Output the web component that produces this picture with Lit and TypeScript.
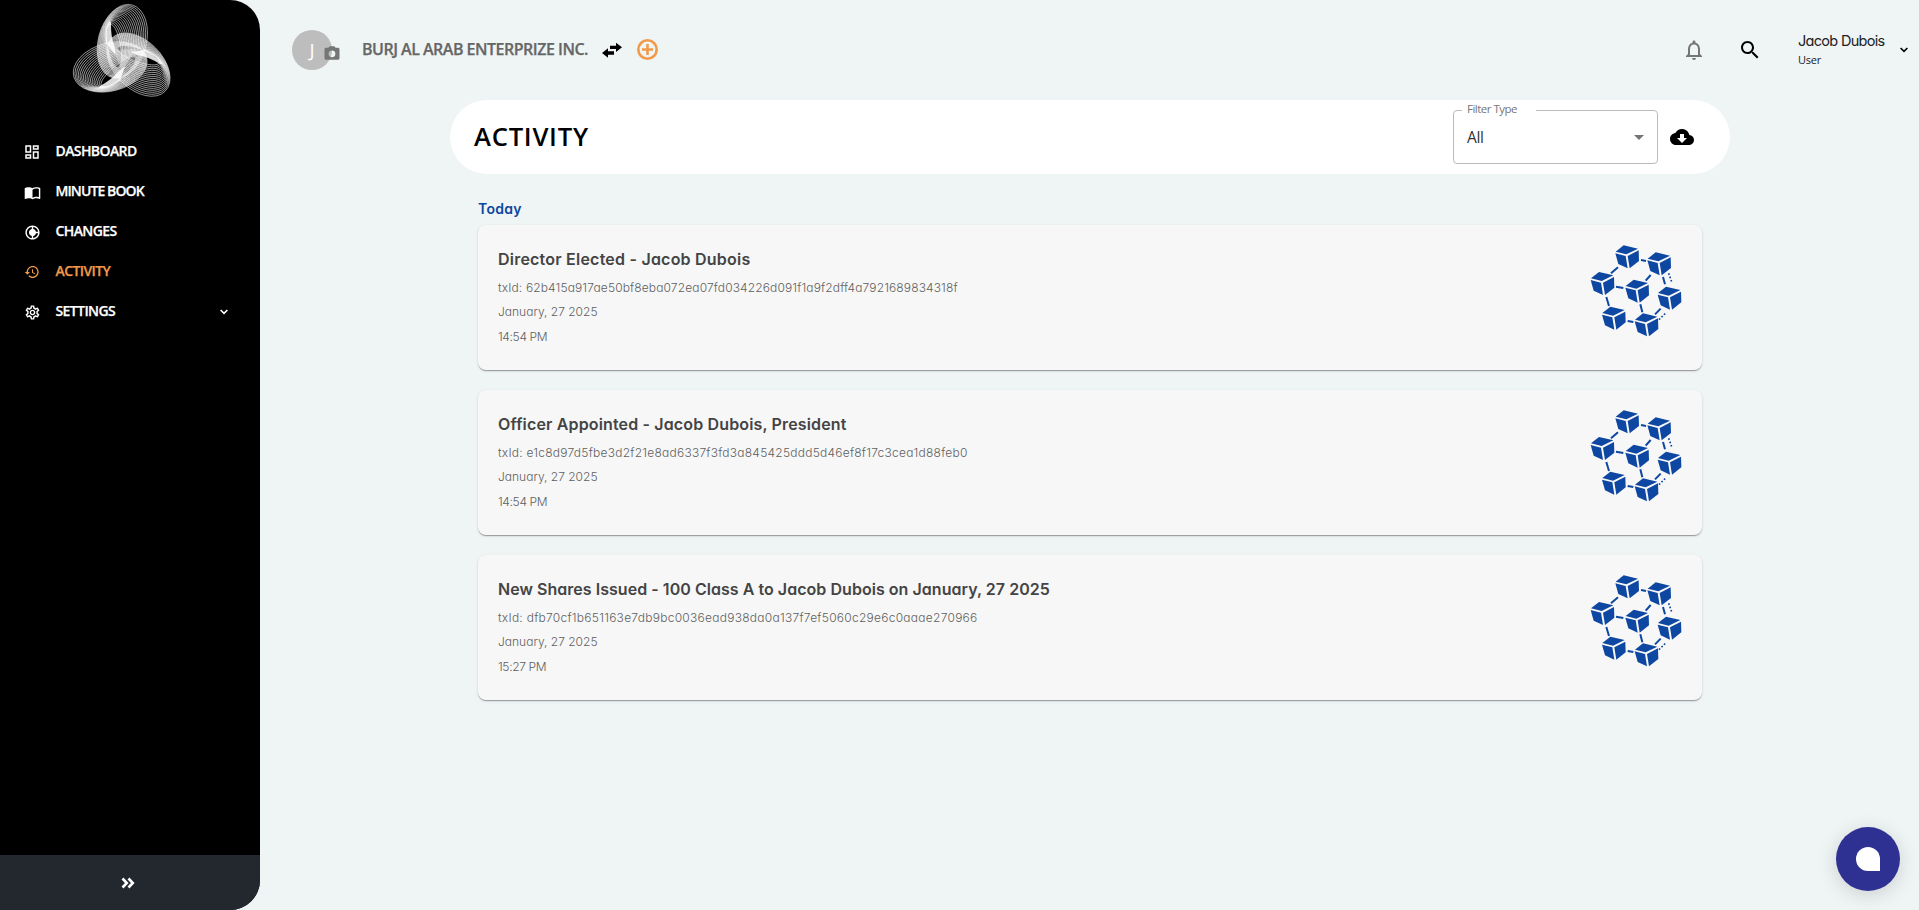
import { LitElement, html, svg, css } from "lit";
import { customElement, property } from "lit/decorators.js";

interface Entry { title: string; tx: string; date: string; time: string; }

const ENTRIES: Entry[] = [
  { title: "Director Elected - Jacob Dubois", tx: "62b415a917ae50bf8eba072ea07fd034226d091f1a9f2dff4a7921689834318f", date: "January, 27 2025", time: "14:54 PM" },
  { title: "Officer Appointed - Jacob Dubois, President", tx: "e1c8d97d5fbe3d2f21e8ad6337f3fd3a845425ddd5d46ef8f17c3cea1d88feb0", date: "January, 27 2025", time: "14:54 PM" },
  { title: "New Shares Issued - 100 Class A to Jacob Dubois on January, 27 2025", tx: "dfb70cf1b651163e7db9bc0036ead938da0a137f7ef5060c29e6c0aaae270966", date: "January, 27 2025", time: "15:27 PM" },
];

const ICONS: Record<string, string> = {
  dashboard: "M19 5v2h-4V5h4M9 5v6H5V5h4m10 8v6h-4v-6h4M9 17v2H5v-2h4M21 3h-8v6h8V3zM11 3H3v10h8V3zm10 8h-8v10h8V11zm-10 4H3v6h8v-6z",
  book: "M21 5c-1.110-.35-2.330-.5-3.500-.5-1.950 0-4.050.4-5.500 1.500-1.450-1.100-3.550-1.500-5.500-1.500S2.450 4.900 1 6v14.650c0 .25.25.5.5.5.1 0 .15-.05.25-.05C3.100 20.450 5.050 20 6.500 20c1.950 0 4.050.4 5.500 1.500 1.350-.85 3.800-1.500 5.500-1.500 1.650 0 3.350.3 4.750 1.050.1.05.15.05.25.05.25 0 .5-.25.5-.5V6c-.6-.45-1.250-.75-2-1zm0 13.500c-1.100-.35-2.300-.5-3.500-.5-1.700 0-4.150.65-5.500 1.500V8c1.350-.85 3.800-1.500 5.500-1.500 1.200 0 2.400.15 3.500.5v11.500z",
  changes: "M12 2C6.480 2 2 6.480 2 12s4.480 10 10 10 10-4.480 10-10S17.520 2 12 2zm1 2.070c3.610.45 6.480 3.330 6.930 6.930h-3.040c-.39-1.950-1.940-3.500-3.890-3.890V4.070zM4 12c0-4.060 3.070-7.440 7-7.930v3.040c-2.280.46-4 2.480-4 4.890s1.720 4.430 4 4.900v3.030c-3.930-.49-7-3.870-7-7.930zm9 7.930V16.900c1.960-.39 3.500-1.940 3.900-3.900h3.030c-.45 3.610-3.320 6.480-6.930 6.930z",
  history: "M13 3c-4.970 0-9 4.030-9 9H1l3.890 3.890.07.14L9 12H6c0-3.870 3.130-7 7-7s7 3.130 7 7-3.130 7-7 7c-1.930 0-3.680-.79-4.940-2.060l-1.420 1.420C8.270 19.990 10.510 21 13 21c4.970 0 9-4.030 9-9s-4.030-9-9-9zm-1 5v5l4.280 2.540.72-1.210-3.500-2.080V8H12z",
  settings: "M19.430 12.980c.04-.32.07-.64.07-.98s-.03-.66-.07-.98l2.110-1.650c.19-.15.24-.42.12-.64l-2-3.460c-.12-.22-.39-.3-.61-.22l-2.490 1c-.52-.4-1.080-.73-1.690-.98l-.38-2.650C14.460 2.180 14.250 2 14 2h-4c-.25 0-.46.18-.49.42l-.38 2.650c-.61.25-1.170.59-1.690.98l-2.490-1c-.23-.09-.49 0-.61.22l-2 3.460c-.13.22-.07.49.12.64l2.110 1.650c-.04.32-.07.65-.07.98s.03.66.07.98l-2.110 1.650c-.19.15-.24.42-.12.64l2 3.460c.12.22.39.3.61.22l2.490-1c.52.4 1.080.73 1.690.98l.38 2.650c.03.24.24.42.49.42h4c.25 0 .46-.18.49-.42l.38-2.650c.61-.25 1.170-.59 1.690-.98l2.490 1c.23.09.49 0 .61-.22l2-3.460c.12-.22.07-.49-.12-.64l-2.110-1.650zm-1.980-1.710c.04.31.05.52.05.73 0 .21-.02.43-.05.73l-.14 1.130.89.7 1.080.84-.7 1.210-1.270-.51-1.040-.42-.9.68c-.43.32-.84.56-1.250.73l-1.060.43-.16 1.130-.2 1.350h-1.400l-.19-1.350-.16-1.130-1.060-.43c-.43-.18-.83-.41-1.230-.71l-.91-.7-1.060.43-1.270.51-.7-1.210 1.080-.84.89-.7-.14-1.130c-.03-.31-.05-.54-.05-.74s.02-.43.05-.73l.14-1.130-.89-.7-1.080-.84.7-1.210 1.270.51 1.040.42.9-.68c.43-.32.84-.56 1.250-.73l1.060-.43.16-1.130.2-1.350h1.390l.19 1.350.16 1.130 1.060.43c.43.18.83.41 1.230.71l.91.7 1.060-.43 1.270-.51.7 1.210-1.070.85-.89.7.14 1.130zM12 8c-2.210 0-4 1.790-4 4s1.790 4 4 4 4-1.790 4-4-1.790-4-4-4zm0 6c-1.100 0-2-.9-2-2s.9-2 2-2 2 .9 2 2-.9 2-2 2z",
  bell: "M12 22c1.100 0 2-.9 2-2h-4c0 1.100.9 2 2 2zm6-6v-5c0-3.070-1.630-5.640-4.500-6.320V4c0-.83-.67-1.500-1.500-1.500s-1.500.67-1.500 1.500v.68C7.640 5.360 6 7.920 6 11v5l-2 2v1h16v-1l-2-2zm-2 1H8v-6c0-2.480 1.510-4.500 4-4.500s4 2.020 4 4.500v6z",
  search: "M15.500 14h-.79l-.28-.27C15.410 12.590 16 11.110 16 9.500 16 5.910 13.090 3 9.500 3S3 5.910 3 9.500 5.910 16 9.500 16c1.610 0 3.090-.59 4.230-1.570l.27.28v.79l5 4.990L20.490 19l-4.990-5zm-6 0C7.010 14 5 11.990 5 9.500S7.010 5 9.500 5 14 7.010 14 9.500 11.990 14 9.500 14z",
  cloud: "M19.350 10.040C18.670 6.590 15.640 4 12 4 9.110 4 6.600 5.640 5.350 8.040 2.340 8.360 0 10.910 0 14c0 3.310 2.690 6 6 6h13c2.760 0 5-2.240 5-5 0-2.640-2.050-4.780-4.650-4.960zM17 13l-5 5-5-5h3V9h4v4h3z",
  camera: "M20 5h-3.200L15 3H9L7.200 5H4c-1.100 0-2 .9-2 2v12c0 1.100.9 2 2 2h16c1.100 0 2-.9 2-2V7c0-1.100-.9-2-2-2zm-8 12.500a4.500 4.500 0 1 1 0-9 4.500 4.500 0 0 1 0 9z",
};

const icon = (name: string, size: number) => html`<svg width=${size} height=${size} viewBox="0 0 24 24" fill="currentColor"><path d=${ICONS[name]}></path></svg>`;

const chevron = html`<svg width="8" height="6" viewBox="0 0 8 6" fill="none" stroke="currentColor" stroke-width="1.6"><path d="M0.600 1l3.400 3.400L7.400 1"></path></svg>`;

const mix = (a: number, b: number, t: number) => a + (b - a) * t;

@customElement("brand-logo")
export class BrandLogo extends LitElement {
  static styles = css`:host { display: block; width: 125px; height: 105px; } svg { display: block; }`;
  render() {
    const steps = Array.from({ length: 17 }, (_, i) => i / 16);
    const petal = (turn: number) => svg`<g transform="rotate(${turn} 191 173)">
      ${steps.map(t => svg`<ellipse cx="0" cy="0" rx=${mix(72, 20, t)} ry=${mix(113, 66, t)}
        transform="translate(${mix(187, 162, t)} ${mix(124, 138, t)}) rotate(${mix(15, -10, t)})"></ellipse>`)}
      <path d="M148 64Q136 108 137 130L150 144L166 164L164 140Q152 112 153 68Z" fill="#fff" fill-opacity="0.85" stroke="none"></path>
    </g>`;
    return html`<svg width="125" height="105" viewBox="0 0 375 315" fill="none" stroke="#fff" stroke-width="2.2" stroke-opacity="0.72">
      ${petal(0)}${petal(120)}${petal(240)}
      <path d="M160 150L228 146L186 214Z" fill="#fff" fill-opacity="0.35" stroke="none"></path>
    </svg>`;
  }
}

@customElement("chain-icon")
export class ChainIcon extends LitElement {
  static styles = css`:host { display: block; width: 92px; height: 92px; } svg { display: block; }`;
  render() {
    const cubes = [[201, 110], [297, 131], [127, 190], [231, 213], [328, 234], [161, 294], [259, 314]];
    return html`<svg width="92" height="92" viewBox="90 75 276 276" fill="#0d47a1">
      ${cubes.map(([x, y]) => svg`<g transform="translate(${x} ${y})">
        <path d="M-34-15L-10-34L33-24L-2-7Z"></path><path d="M-35-10L-4-2L2 35L-26 22Z"></path><path d="M35-19L2-2L8 35L36 13Z"></path></g>`)}
      <g fill="none" stroke="#0d47a1" stroke-width="6">
        <path d="M243 120l15 3M153 160l21-18M168 200l22 4M257 182l15-17M309 171l6 22M139 231l8 27M241 253l6 24M203 303l17 3M285 283l17-17"></path>
        <path stroke-width="5" stroke-dasharray="5 5.500" d="M326 160l10 28M297 299l21-21"></path>
      </g>
    </svg>`;
  }
}

@customElement("side-nav")
export class SideNav extends LitElement {
  static styles = css`
    :host { display: flex; flex-direction: column; width: 260px; height: 910px; background: #000; color: #fff; border-radius: 0 30px 30px 0; overflow: hidden; font-family: "Open Sans", sans-serif; }
    .logo { padding-left: 60px; height: 132px; }
    .item { display: flex; align-items: center; height: 40px; padding: 0 32px 0 24px; font-size: 14px; font-weight: 600; box-sizing: border-box; }
    .item svg { display: block; }
    .glyph { display: grid; place-items: center; place-content: center; width: 16px; height: 18px; }
    .label { margin-left: 15.5px; flex: 1; white-space: nowrap; letter-spacing: -0.6px; padding-bottom: 3px; -webkit-text-stroke: 0.25px currentColor; }
    .book { letter-spacing: -0.9px; }
    .active { color: #f2994a; }
    .grow { flex: 1; }
    .foot { display: flex; align-items: center; height: 55px; padding-left: 121px; background: #23282f; }
  `;
  render() {
    const items: [string, string, number][] = [["dashboard", "DASHBOARD", 18], ["book", "MINUTE BOOK", 17], ["changes", "CHANGES", 17], ["history", "ACTIVITY", 16], ["settings", "SETTINGS", 17]];
    return html`
      <div class="logo"><brand-logo></brand-logo></div>
      ${items.map(([i, t, s]) => html`<div class="item ${t === "ACTIVITY" ? "active" : ""}"><span class="glyph">${icon(i, s)}</span><span class="label ${i}">${t}</span>${t === "SETTINGS" ? chevron : ""}</div>`)}
      <div class="grow"></div>
      <div class="foot"><svg width="14" height="12" viewBox="0 0 14 12" fill="none" stroke="#fff" stroke-width="2.6"><path d="M1.500 1.500L5.800 6l-4.300 4.500M7.500 1.500L11.800 6l-4.300 4.500"></path></svg></div>`;
  }
}

@customElement("activity-card")
export class ActivityCard extends LitElement {
  @property({ attribute: false }) entry!: Entry;
  static styles = css`
    :host { display: flex; justify-content: space-between; height: 145px; box-sizing: border-box; padding: 20px 20px 0 20px; background: #f7f7f7; border-radius: 8px; box-shadow: 0 2px 1px -1px rgba(0,0,0,.2), 0 1px 1px rgba(0,0,0,.14), 0 1px 3px rgba(0,0,0,.12); font-family: Inter, sans-serif; font-feature-settings: "cv11"; }
    .title { font-size: 16px; line-height: 28px; font-weight: 600; color: #444; white-space: nowrap; letter-spacing: var(--title-track); margin-bottom: 2.5px; }
    .line { font-size: 12px; line-height: 24.5px; font-weight: 300; color: #5f5f5f; white-space: nowrap; }
    .tx { letter-spacing: var(--tx-track); }
    .time { letter-spacing: -0.35px; }
  `;
  render() {
    return html`<div><div class="title">${this.entry.title}</div>
      <div class="line tx">txId: ${this.entry.tx}</div><div class="line">${this.entry.date}</div><div class="line time">${this.entry.time}</div></div>
      <chain-icon></chain-icon>`;
  }
}

@customElement("app-root")
export class AppRoot extends LitElement {
  static styles = css`
    :host { display: flex; width: 1919px; height: 910px; overflow: hidden; background: #eff4f5; font-family: "Open Sans", sans-serif; position: relative; }
    svg { display: block; }
    main { flex: 1; min-width: 0; }
    header { display: flex; align-items: center; height: 100px; padding: 0 11px 0 32px; box-sizing: border-box; }
    .avatar { position: relative; width: 40px; height: 40px; border-radius: 50%; background: #bdbdbd; color: #fff; display: grid; place-items: center; font-size: 19px; }
    .cam { position: absolute; left: 31px; top: 14px; color: #757575; }
    .company { margin-left: 30px; width: 225px; font-size: 16px; font-weight: 600; color: #666; white-space: nowrap; letter-spacing: -0.5px; padding-bottom: 2px; -webkit-text-stroke: 0.25px currentColor; }
    .swap { margin-left: 14.5px; padding-bottom: 1px; }
    .plus { margin-left: 15px; padding-bottom: 1px; }
    .spacer { flex: 1; }
    .bell { color: #757575; }
    .search { margin-left: 32px; }
    .user { margin-left: 36px; width: 102px; color: #222; white-space: nowrap; padding-bottom: 1px; }
    .name { font-family: Inter, sans-serif; font-feature-settings: "cv11"; font-size: 14.5px; line-height: 20px; letter-spacing: -0.7px; padding-bottom: 1px; }
    .role { font-size: 11px; line-height: 16px; letter-spacing: -0.2px; }
    .banner { display: flex; align-items: center; width: 1280px; height: 74px; margin-left: 190px; padding: 0 36px 0 24px; box-sizing: border-box; border-radius: 37px; background: #fff; }
    h1 { margin: 0; font-size: 25.6px; font-weight: 600; color: #000; flex: 1; line-height: 36px; letter-spacing: 0.75px; }
    .select { position: relative; display: flex; align-items: center; justify-content: space-between; width: 205px; height: 54px; box-sizing: border-box; border: 1px solid #bbb; border-radius: 4px; padding: 0 13px; font-size: 15.5px; color: #333; }
    .all { letter-spacing: -0.3px; padding-bottom: 1px; }
    .legend { position: absolute; left: 8px; top: -10px; width: 74px; height: 16px; padding-left: 5px; box-sizing: border-box; background: #fff; font-size: 11.5px; letter-spacing: -0.5px; line-height: 16px; color: #777; }
    .dl { margin-left: 12px; }
    .list { width: 1224px; margin-left: 218px; padding-top: 25px; }
    .today { font-family: Inter, sans-serif; font-feature-settings: "cv11"; font-size: 14px; line-height: 20px; margin-bottom: 6px; font-weight: 600; color: #0d47a1; letter-spacing: 0.3px; }
    .cards { display: flex; flex-direction: column; gap: 20px; }
    activity-card { --title-track: 0.22px; --tx-track: 0.13px; }
    activity-card:nth-child(2) { --title-track: 0.15px; --tx-track: 0.24px; }
    activity-card:nth-child(3) { --title-track: 0.04px; --tx-track: 0.26px; }
    .chat { position: absolute; left: 1836px; top: 827px; width: 64px; height: 64px; border-radius: 50%; background: #2e3192; display: grid; place-items: center; box-shadow: 0 4px 20px rgba(0,0,0,.15); }
    .bubble { width: 24px; height: 24px; background: #fff; border-radius: 12px 12px 0 12px; }
  `;
  render() {
    return html`<side-nav></side-nav>
      <main>
        <header>
          <div class="avatar"><span>J</span><span class="cam">${icon("camera", 18)}</span></div>
          <span class="company">BURJ AL ARAB ENTERPRIZE INC.</span>
          <span class="swap"><svg width="20" height="16" viewBox="0 0 60 48"><path d="M24 11H42V2L60 16L42 30V21H24ZM36 38H18V47L0 33L18 19V28H36Z"></path></svg></span>
          <span class="plus"><svg width="21" height="21" viewBox="0 0 21 21" fill="none" stroke="#f2994a" stroke-width="2.6"><circle cx="10.5" cy="10.5" r="9.2"></circle><path d="M10.5 5v11M5 10.500h11"></path></svg></span>
          <span class="spacer"></span>
          <span class="bell">${icon("bell", 24)}</span><span class="search">${icon("search", 24)}</span>
          <div class="user"><div class="name">Jacob Dubois</div><div class="role">User</div></div>
          ${chevron}
        </header>
        <section class="banner"><h1>ACTIVITY</h1>
          <div class="select"><span class="legend">Filter Type</span><span class="all">All</span><svg width="10" height="5" viewBox="0 0 10 5" fill="#757575"><path d="M0 0h10L5 5z"></path></svg></div>
          <span class="dl">${icon("cloud", 24)}</span>
        </section>
        <section class="list"><div class="today">Today</div>
          <div class="cards">${ENTRIES.map(e => html`<activity-card .entry=${e}></activity-card>`)}</div>
        </section>
      </main>
      <div class="chat"><div class="bubble"></div></div>`;
  }
}
